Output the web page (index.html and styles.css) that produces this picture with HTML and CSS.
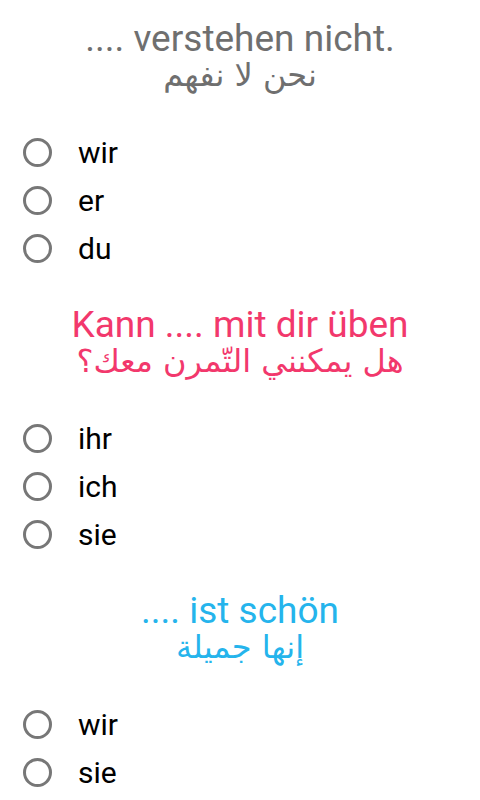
FILE: index.html
```html
<!DOCTYPE html>
<html lang="de">
<head>
<meta charset="utf-8">
<link rel="stylesheet" href="styles.css">
</head>
<body>
<main class="quiz">
  <section class="question q-gray">
    <div class="title">.... verstehen nicht.</div>
    <div class="ar" dir="rtl" lang="ar">نحن لا نفهم</div>
    <div class="options">
      <label class="option"><span class="radio"></span><span class="label">wir</span></label>
      <label class="option"><span class="radio"></span><span class="label">er</span></label>
      <label class="option"><span class="radio"></span><span class="label">du</span></label>
    </div>
  </section>
  <section class="question q-pink">
    <div class="title">Kann .... mit dir üben</div>
    <div class="ar" dir="rtl" lang="ar">هل يمكنني التّمرن معك؟</div>
    <div class="options">
      <label class="option"><span class="radio"></span><span class="label">ihr</span></label>
      <label class="option"><span class="radio"></span><span class="label">ich</span></label>
      <label class="option"><span class="radio"></span><span class="label">sie</span></label>
    </div>
  </section>
  <section class="question q-blue">
    <div class="title">.... ist schön</div>
    <div class="ar" dir="rtl" lang="ar">إنها جميلة</div>
    <div class="options">
      <label class="option"><span class="radio"></span><span class="label">wir</span></label>
      <label class="option"><span class="radio"></span><span class="label">sie</span></label>
    </div>
  </section>
</main>
</body>
</html>
```

FILE: styles.css
```css
* { box-sizing: border-box; }
html, body {
  margin: 0;
  padding: 0;
  background: #ffffff;
  width: 480px;
  height: 800px;
  overflow: hidden;
}
body {
  font-family: Roboto, "Liberation Sans", sans-serif;
}
.quiz {
  display: flex;
  flex-direction: column;
  gap: 33px;
  padding-top: 19.5px;
}
.question {
  display: flex;
  flex-direction: column;
}
.title {
  text-align: center;
  font-size: 37px;
  line-height: 38px;
}
.ar {
  text-align: center;
  font-family: "DejaVu Sans", sans-serif;
  font-size: 32px;
  line-height: 34px;
}
.q-gray .title, .q-gray .ar { color: #6f6f6f; }
.q-pink .title, .q-pink .ar { color: #f2386c; }
.q-blue .title, .q-blue .ar { color: #25b4ec; }
.options {
  display: flex;
  flex-direction: column;
  margin-top: 37px;
  padding-left: 23px;
}
.option {
  display: flex;
  align-items: center;
  height: 48px;
  gap: 26px;
}
.radio {
  width: 29px;
  height: 29px;
  border: 3px solid #777777;
  border-radius: 50%;
  flex: none;
}
.label {
  font-size: 30px;
  line-height: 32px;
  color: #000000;
}
```
